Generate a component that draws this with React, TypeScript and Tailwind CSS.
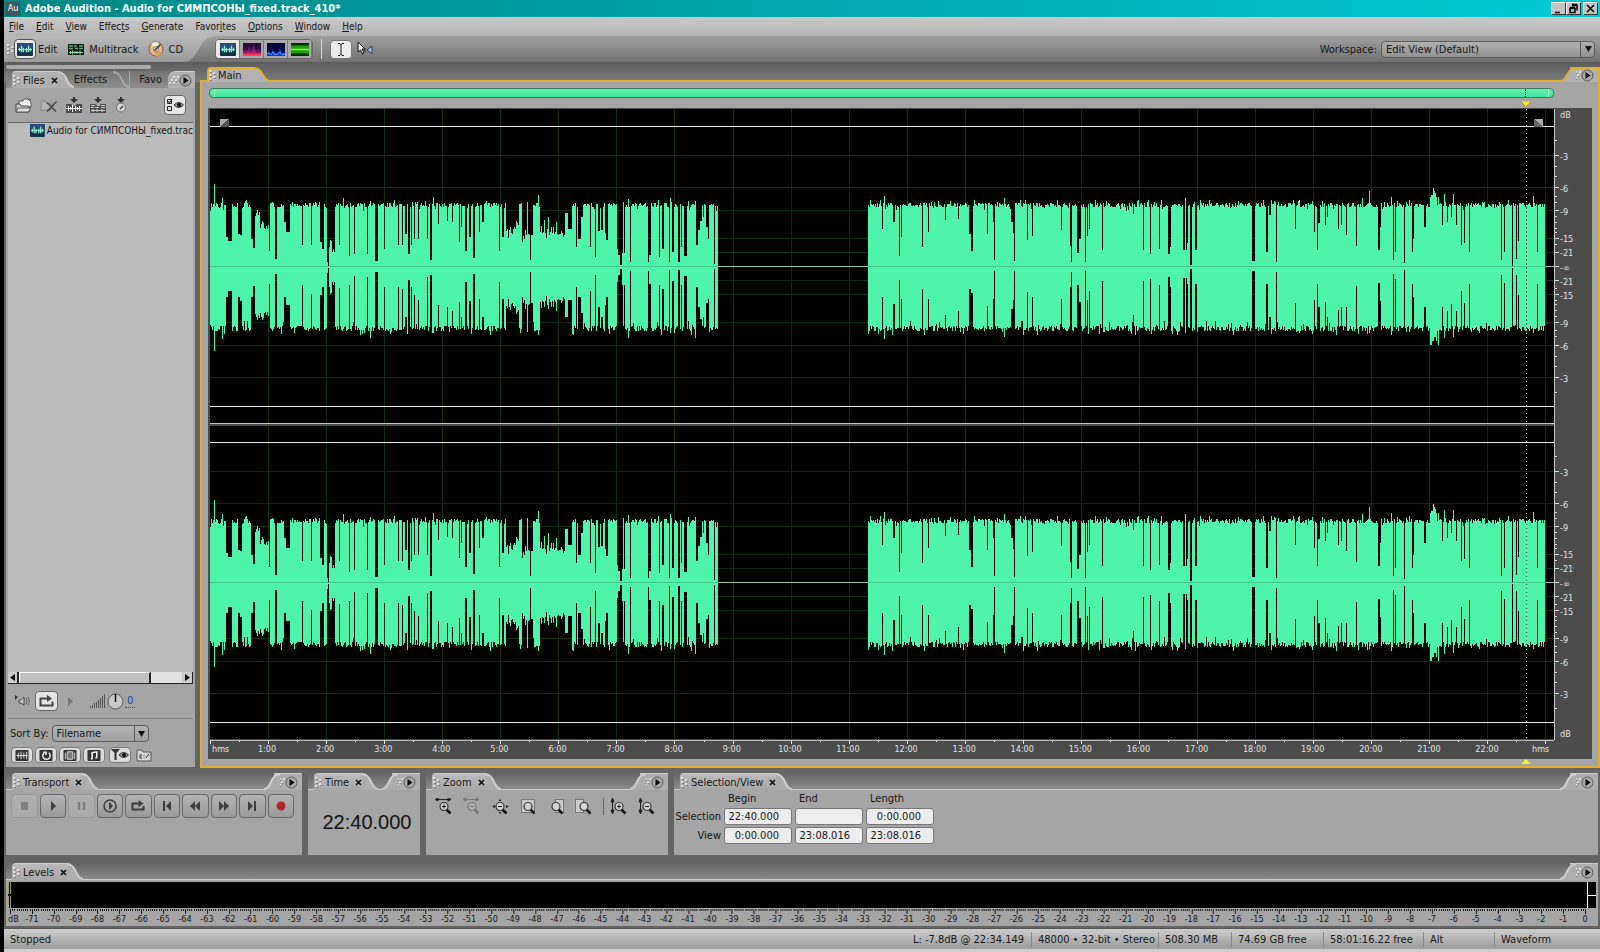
import type { ReactNode } from "react";

const WAVE_WIDTH = 1344;
const CHANNELS = [158, 474];

// x, width, level above the centre line, level below it
const dips: number[][] = [
  [16, 2, 30, 30], [18, 4, 26, 24], [28, 2, 33, 30], [30, 2, 32, 34], [41, 2, 28, 30],
  [43, 2, 19, 19], [45, 5, 56, 52], [50, 9, 41, 48],
  [59, 1, 16, 17], [65, 2, 8, 7], [74, 2, 45, 30], [76, 4, 35, 38], [92, 1, 22, 18], [101, 1, 22, 27],
  [110, 2, 25, 28], [112, 2, 18, 20], [117, 1, 5, 6], [118, 1, 1, 1], [119, 6, 21, 21],
  [129, 1, 22, 21], [133, 1, 4, 4],
  [139, 1, 11, 18], [144, 1, 13, 9], [157, 1, 13, 10], [160, 1, 53, 54], [165, 3, 6, 5],
  [174, 1, 18, 20], [188, 1, 22, 20], [192, 1, 22, 22], [195, 2, 33, 50], [198, 2, 13, 13],
  [201, 1, 22, 20], [204, 1, 28, 28], [208, 1, 28, 33], [217, 1, 28, 10], [220, 2, 7, 8],
  [228, 1, 43, 38], [237, 1, 46, 40], [242, 1, 45, 44], [249, 1, 25, 35], [251, 1, 40, 50],
  [255, 2, 16, 15], [259, 2, 30, 34], [263, 2, 9, 7], [269, 1, 35, 32], [272, 2, 45, 50],
  [289, 1, 16, 15], [292, 2, 30, 32], [296, 7, 35, 38], [303, 6, 43, 44], [312, 8, 31, 36],
  [320, 1, 7, 5], [321, 2, 32, 36],
  [330, 25, 35, 35], [355, 3, 54, 50], [358, 4, 38, 33], [366, 1, 20, 20], [368, 3, 28, 30],
  [371, 2, 50, 46], [380, 1, 20, 24], [385, 1, 10, 8], [388, 2, 36, 40], [391, 2, 37, 50],
  [395, 1, 34, 38], [396, 2, 27, 30], [407, 1, 18, 15], [408, 2, 12, 8], [410, 2, 2, 2],
  [412, 1, 14, 18], [414, 1, 14, 18], [420, 1, 5, 4], [438, 1, 5, 4], [439, 2, 12, 17],
  [449, 1, 10, 18], [452, 2, 18, 22], [459, 1, 5, 3], [462, 2, 15, 14], [468, 2, 5, 3],
  [471, 1, 20, 18], [474, 3, 11, 9], [486, 2, 22, 20], [488, 2, 37, 40], [490, 2, 46, 52],
  [493, 1, 50, 50], [496, 2, 40, 36], [498, 1, 28, 32], [504, 1, 3, 2],
  [672, 1, 38, 30], [683, 2, 45, 37], [689, 1, 11, 13], [691, 1, 30, 32], [712, 1, 20, 22],
  [718, 1, 35, 32], [735, 1, 47, 48], [748, 1, 48, 44], [759, 2, 33, 22], [761, 2, 16, 26],
  [777, 1, 33, 39], [783, 1, 45, 32], [784, 1, 7, 4], [801, 2, 45, 42], [803, 2, 34, 33],
  [804, 1, 6, 4], [817, 1, 27, 25], [822, 1, 31, 30], [851, 1, 37, 32], [860, 1, 21, 20],
  [861, 1, 5, 5], [867, 2, 14, 18], [869, 2, 28, 35], [875, 1, 5, 4], [877, 1, 31, 33],
  [879, 1, 38, 24], [892, 1, 17, 14], [923, 1, 53, 48], [933, 1, 17, 14], [940, 1, 13, 12],
  [949, 1, 18, 18], [958, 2, 13, 10], [960, 1, 20, 20], [973, 4, 17, 11], [977, 1, 24, 17],
  [980, 2, 2, 2], [985, 2, 17, 17], [1042, 3, 6, 4], [1056, 2, 15, 17], [1059, 2, 52, 50],
  [1066, 1, 5, 5], [1085, 1, 38, 36], [1104, 1, 35, 33], [1107, 1, 17, 17], [1108, 2, 44, 40],
  [1115, 1, 42, 35], [1117, 1, 50, 50], [1128, 1, 38, 43], [1131, 1, 42, 40], [1136, 1, 32, 40],
  [1146, 1, 21, 19], [1168, 2, 17, 16], [1170, 1, 40, 34], [1183, 1, 7, 7], [1185, 1, 15, 12],
  [1194, 1, 4, 3], [1202, 1, 15, 17], [1203, 1, 28, 30], [1214, 2, 40, 40], [1232, 1, 42, 40],
  [1237, 1, 45, 44], [1241, 1, 50, 37], [1246, 1, 42, 44], [1251, 1, 22, 24], [1254, 1, 24, 36],
  [1259, 1, 15, 17], [1291, 1, 7, 8], [1294, 1, 15, 16], [1302, 1, 1, 1], [1306, 1, 8, 8],
  [1308, 1, 26, 28], [1327, 1, 15, 17],
];

const peaks: number[][] = [
  [4, 83, 84], [12, 69, 72], [133, 69, 62], [160, 66, 71], [223, 70, 66], [317, 65, 65],
  [328, 72, 68], [334, 47, 40], [338, 50, 42], [346, 45, 44], [418, 68, 71], [460, 69, 66],
  [485, 66, 71], [674, 71, 72], [794, 69, 70], [975, 69, 66], [1152, 69, 64], [1159, 76, 66],
  [1181, 70, 68], [1220, 70, 78], [1221, 72, 78], [1222, 72, 74], [1223, 79, 74], [1224, 76, 70],
  [1225, 74, 70], [1226, 70, 74], [1228, 70, 78], [1234, 73, 71], [1243, 73, 70],
  [1323, 71, 66],
];

function buildLevels() {
  let seed = 41;
  const rand = () => {
    seed = (seed * 16807) % 2147483647;
    return seed / 2147483647;
  };
  const levels: number[][] = [];
  for (let x = 0; x < 1335; x++) {
    const up = 60 + Math.floor(rand() * 5) + (rand() > 0.9 ? 3 : 0) - (rand() > 0.94 ? 4 : 0);
    const down = 59 + Math.floor(rand() * 6) + (rand() > 0.9 ? 4 : 0) - (rand() > 0.94 ? 5 : 0);
    levels.push(x >= 508 && x < 658 ? [0, 0] : [up, down]);
  }
  dips.forEach(([x, w, up, down]) => {
    for (let i = x; i < x + w; i++) {
      const jitter = w > 4 ? Math.round(rand() * 12 - 6) : 0;
      levels[i] = [up + (up > 20 ? jitter : 0), down + (down > 20 ? jitter : 0)];
    }
  });
  peaks.forEach(([x, up, down]) => {
    levels[x] = [up, down];
  });
  return levels;
}

const levels = buildLevels();

const wavePath = (centre: number) =>
  levels
    .map(([up, down], x) => (up ? `M${x + 0.5} ${centre - up}V${centre + down}` : ""))
    .join("");

const gridRows = [-111, -79, -56, -28, -14, 14, 28, 56, 79, 111];
const minutes = Array.from({ length: 22 }, (_, i) => `${i + 1}:00`);

// label and its centre, measured from the top of the chart
const decibels: [string, number][] = [
  ["dB", 6], ["-3", 48], ["-6", 80], ["-9", 103], ["-15", 130], ["-21", 144], ["-∞", 159],
  ["-21", 173], ["-15", 187], ["-9", 215], ["-6", 238], ["-3", 270], ["-3", 364], ["-6", 396],
  ["-9", 419], ["-15", 446], ["-21", 460], ["-∞", 475], ["-21", 489], ["-15", 503], ["-9", 531],
  ["-6", 554], ["-3", 586], ["dB", 625],
];

const menus = [
  ["", "F", "ile"],
  ["", "E", "dit"],
  ["", "V", "iew"],
  ["Effec", "t", "s"],
  ["", "G", "enerate"],
  ["Favor", "i", "tes"],
  ["", "O", "ptions"],
  ["", "W", "indow"],
  ["", "H", "elp"],
];

function Grip() {
  return (
    <svg className="h-[11px] w-[7px] shrink-0" viewBox="0 0 7 11">
      <path d="M0 1h2M0 5h2M0 9h2M4 3h2M4 7h2" stroke="#e2e2e2" strokeWidth="2" />
      <path d="M1 2.500h2M1 6.500h2M1 10.500h2M5 4.500h2M5 8.500h2" stroke="#808080" />
    </svg>
  );
}

function PanelMenu() {
  return (
    <button className="flex shrink-0 items-center" aria-label="Panel menu">
      <svg className="h-[9px] w-[11px]" viewBox="0 0 11 9">
        <path d="M5 1h2M9 1h2M3 4h2M7 4h2M1 7h2M5 7h2" stroke="#dedede" strokeWidth="2" />
        <path d="M6 2.500h1M4 5.500h1M8 5.500h1M2 8.500h1M6 8.500h1" stroke="#777" />
      </svg>
      <svg className="size-[13px]" viewBox="0 0 13 13">
        <circle cx="6.500" cy="6.500" r="5.500" fill="#aaa" stroke="#555" />
        <path d="M4.500 3v7l5-3.500z" fill="#000" />
      </svg>
    </button>
  );
}

function Slope({ flip, color, fill }: { flip?: boolean; color: string; fill: string }) {
  return (
    <svg
      className={flip ? "h-full w-4 shrink-0 -scale-x-100" : "h-full w-4 shrink-0"}
      viewBox="0 0 16 16"
      preserveAspectRatio="none"
    >
      <path d="M0 1C5 1 7 4 9 8.500S13 15 16 15V16H0z" fill={fill} />
      <path d="M0 1C5 1 7 4 9 8.500S13 15 16 15" fill="none" stroke={color} strokeWidth="2" />
    </svg>
  );
}

function Header({ title }: { title: string }) {
  return (
    <div className="flex h-[17px] bg-gradient-to-b from-[#646464] to-[#8e8e8e]">
      <span className="w-[6px] border-b border-[#cfcfcf]" />
      <div className="flex items-center gap-[3px] rounded-tl border-t border-[#cfcfcf] bg-gradient-to-b from-[#bbb] to-[#a8a8a8] pl-px">
        <Grip />
        <h2>{title}</h2>
        <CloseTab />
      </div>
      <Slope color="#cfcfcf" fill="#aeaeae" />
      <span className="flex-1 border-b border-[#cfcfcf]" />
      <Slope flip color="#cfcfcf" fill="#aeaeae" />
      <div className="-ml-[6px] flex items-center border-t border-[#cfcfcf] bg-[#aeaeae] pr-1">
        <PanelMenu />
      </div>
    </div>
  );
}

function CloseTab() {
  return (
    <button className="ml-[3px]" aria-label="Close tab">
      <svg className="size-[7px]" viewBox="0 0 7 7">
        <path d="M1 1l5 5M6 1L1 6" stroke="#111" strokeWidth="1.700" />
      </svg>
    </button>
  );
}

function TitleBar() {
  return (
    <header className="flex h-[17px] items-center gap-[5px] bg-gradient-to-r from-[#008788] to-[#00c9d4] px-[2px]">
      <span className="flex h-[14px] w-[14px] items-center justify-center bg-[#3d5860] text-[9px] text-white">Au</span>
      <h1 className="flex-1 text-[11px] font-bold text-white">
        Adobe Audition - Audio for СИМПСОНЫ_fixed.track_410*
      </h1>
      <div className="flex">
        {["M2 9.500h5", "M4 2.500h5v5M4 1.500h5M2 5.500h5v4h-5zM2 4.500h5", "M2 2l7 7M9 2l-7 7"].map((d, i) => (
          <button
            key={i}
            aria-label={["Minimize", "Restore", "Close"][i]}
            className="flex h-[13px] w-[15px] items-center justify-center border border-t-white border-l-white border-r-[#333] border-b-[#333] bg-[#c4c4c4] last:ml-[2px]"
          >
            <svg className="size-[11px]" viewBox="0 0 11 11">
              <path d={d} fill="none" stroke="#000" strokeWidth="1.500" />
            </svg>
          </button>
        ))}
      </div>
    </header>
  );
}

function WaveIcon() {
  return (
    <svg className="h-[13px] w-[16px]" viewBox="0 0 16 14" preserveAspectRatio="none">
      <rect width="16" height="14" rx="1" fill="#14304c" />
      <rect width="16" height="5" fill="#2a4a7c" />
      <path
        d="M2.500 5v4M4.500 3v7M6.500 5v5M9.500 5v5M11.500 3v7M13.500 5v4"
        stroke="#8ff0d0"
        strokeWidth="1.400"
      />
      <path d="M1 7h14" stroke="#8ff0d0" />
    </svg>
  );
}

function SessionIcon({ mono }: { mono?: boolean }) {
  return (
    <svg className="h-[11px] w-[16px]" viewBox="0 0 16 11">
      <rect width="16" height="11" fill={mono ? "#3c3c3c" : "#0e1c16"} />
      <path d="M1 2h4M6 2h3M11 2h4M1 4.500h4M7 4.500h3M11 4.500h4" stroke={mono ? "#bbb" : "#5aa877"} strokeWidth="1.400" />
      <path
        d="M1 8.500h14M2.500 7v3M4.500 6.500v4M7 7v3M9 7v3M12 6.500v4"
        stroke={mono ? "#ddd" : "#9adcb6"}
      />
    </svg>
  );
}

function DiscIcon() {
  return (
    <svg className="size-[16px]" viewBox="0 0 16 16">
      <circle cx="8" cy="8" r="7" fill="#eebc74" stroke="#5d5470" />
      <path d="M8 8L3 3a7 7 0 0 1 8-1z" fill="#fff3d5" />
      <path d="M8 8l6 4a7 7 0 0 1-7 3z" fill="#e0a05a" />
      <circle cx="8" cy="8" r="2.500" fill="#eee" stroke="#777" />
      <path d="M6.500 9.500l6-6" stroke="#333" strokeWidth="1.500" />
    </svg>
  );
}

function Spectrum({ kind }: { kind: number }) {
  const tone = ["#2b0a3c", "#04063c", "#052c05"][kind];
  return (
    <svg className="h-[13px] w-[18px]" viewBox="0 0 18 13">
      <rect width="18" height="13" fill={tone} />
      {kind === 0 && (
        <>
          <path d="M0 13V8l2-3 2 3 2-5 2 4 3-5 2 6 2-3 3 4v4z" fill="#6a1a72" />
          <path d="M0 12V9l3 1 2-2 3 2 3-3 3 3 4-1v3z" fill="#c2246c" />
          <path d="M0 12h18" stroke="#ff3b5c" strokeWidth="2" />
        </>
      )}
      {kind === 1 && (
        <>
          <path d="M0 13v-3l2-2 2 2 2-4 2 4 3-1 2-4 2 5 3-1v4z" fill="#1238c8" />
          <path d="M0 11l2-1 2 2 2-3 2 3 3-1 2-2 2 3 3-1" fill="none" stroke="#4a9aff" />
        </>
      )}
      {kind === 2 && (
        <>
          <path d="M0 4h18M0 9h18" stroke="#1f9e12" strokeWidth="3" />
          <path d="M0 6.500h18" stroke="#67ff37" strokeWidth="2" />
        </>
      )}
    </svg>
  );
}

function Toolbar() {
  const viewButton = "flex h-[18px] w-6 items-center justify-center border-r border-[#777]";
  return (
    <div className="flex h-[26px] items-center bg-gradient-to-b from-[#a2a2a2] to-[#717171]">
      <div className="flex h-full items-center bg-gradient-to-b from-[#b9b9b9] to-[#9b9b9b] pl-[3px]">
        <Grip />
        <button className="flex items-center gap-[2px]">
          <span className="flex h-[20px] w-[22px] items-center justify-center rounded-sm border border-[#555] bg-[#e6e6e6]">
            <WaveIcon />
          </span>
          Edit
        </button>
        <button className="ml-[11px] flex items-center gap-[5px]">
          <SessionIcon />
          Multitrack
        </button>
        <button className="ml-[9px] flex items-center gap-[5px]">
          <DiscIcon />
          CD
        </button>
      </div>
      <svg className="h-full w-[32px] shrink-0" viewBox="0 0 34 26" preserveAspectRatio="none">
        <defs>
          <linearGradient id="lobe" x1="0" y1="0" x2="0" y2="1">
            <stop offset="0" stopColor="#b9b9b9" />
            <stop offset="1" stopColor="#9b9b9b" />
          </linearGradient>
        </defs>
        <path d="M0 0h34C22 1 20 9 15 16S6 26 0 26z" fill="url(#lobe)" />
      </svg>
      <div className="flex overflow-hidden rounded-sm border border-[#666]">
        <button className={`${viewButton} bg-[#e9e9e9]`} aria-label="Waveform display">
          <WaveIcon />
        </button>
        {["Spectral frequency", "Spectral pan", "Spectral phase"].map((name, i) => (
          <button key={name} className={`${viewButton} bg-[#aaa]`} aria-label={name}>
            <Spectrum kind={i} />
          </button>
        ))}
      </div>
      <span className="ml-2 h-5 w-px bg-[#d8d8d8]" />
      <button
        className="ml-2 flex h-[19px] w-[22px] items-center justify-center rounded-sm border border-[#777] bg-[#ececec]"
        aria-label="Time selection tool"
      >
        <svg className="h-[13px] w-[8px]" viewBox="0 0 8 13">
          <path d="M1 .5h2l1 1 1-1h2M4 1v11M1 12.500h2l1-1 1 1h2" fill="none" stroke="#111" />
        </svg>
      </button>
      <button className="ml-[5px]" aria-label="Scrub tool">
        <svg className="h-[16px] w-[17px]" viewBox="0 0 17 16">
          <path d="M1 1v10l2.500-2 2 4 1.500-1-2-4h3z" fill="#eee" stroke="#111" />
          <path d="M15 5v8l-5-4z" fill="#8fc0e6" stroke="#24425c" />
          <path d="M8 7v4" stroke="#222" />
        </svg>
      </button>
      <label className="ml-auto mr-1" htmlFor="workspace">Workspace:</label>
      <div className="relative mr-[5px] w-[214px]">
        <select
          id="workspace"
          className="block h-[17px] w-full appearance-none rounded-sm border border-[#5a5a5a] bg-gradient-to-b from-[#b0b0b0] to-[#929292] pl-1 leading-[15px]"
        >
          <option>Edit View (Default)</option>
        </select>
        <DropArrow />
      </div>
    </div>
  );
}

function DropArrow() {
  return (
    <span className="pointer-events-none absolute top-0 right-0 flex h-full w-[15px] items-center justify-center border-l border-[#5a5a5a]">
      <svg className="h-[6px] w-[7px]" viewBox="0 0 7 6">
        <path d="M0 0h7L3.500 6z" fill="#111" />
      </svg>
    </span>
  );
}

const importShapes = [
  <path key="wave" d="M0 11.500h16M2.500 9v5M4.500 10v3M6.500 8v7M9.500 9v5M11.500 10v3M13.500 9v5" stroke="#ececec" />,
  <path key="session" d="M1 8.500h4M7 8.500h3M11 8.500h4M1 10.500h3M5 10.500h4M11 10.500h4M1 13.500h14M3 12v3M7 12v3M12 12v3" stroke="#ccc" />,
];

function FileToolbar() {
  return (
    <div className="flex h-[34px] items-center gap-2 px-[9px]">
      <button aria-label="Import file">
        <svg className="h-[15px] w-[18px]" viewBox="0 0 18 15">
          <path d="M4 9V3h4l1-2h6v7" fill="#eee" stroke="#555" />
          <path d="M13 1l3 3v5h-3" fill="#fff" stroke="#555" />
          <path d="M1 14V6h4l1 2h8v6z" fill="#d0d0d0" stroke="#444" />
          <path d="M1 14l2-4h13l-3 4z" fill="#e4e4e4" stroke="#555" />
        </svg>
      </button>
      <button className="-ml-px" aria-label="Close file">
        <svg className="h-[15px] w-[18px]" viewBox="0 0 18 15">
          <path d="M1 12V3h4l1 2h5v7z" fill="#b4b4b4" stroke="#888" />
          <path d="M7 4.500l9 9M16.500 3.500l-9.500 10" stroke="#444" strokeWidth="1.500" />
        </svg>
      </button>
      {importShapes.map((shape, i) => (
        <button key={i} aria-label={["Insert into edit view", "Insert into multitrack"][i]}>
          <svg className="h-[16px] w-[16px]" viewBox="0 0 16 16">
            <path d="M7 0h2v2h3L8 6 4 2h3z" fill="#333" />
            <path d="M0 7h5l3 2 3-2h5v9H0z" fill="#4c4c4c" />
            {shape}
          </svg>
        </button>
      ))}
      <button aria-label="Insert into CD">
        <svg className="h-[16px] w-[14px]" viewBox="0 0 14 16">
          <path d="M6 0h2v2h3L7 6 3 2h3z" fill="#333" />
          <circle cx="7" cy="10.500" r="4.500" fill="#d8d8d8" stroke="#666" />
          <path d="M6 12l3-3" stroke="#333" strokeWidth="1.500" />
        </svg>
      </button>
      <button
        className="ml-auto flex h-[20px] w-[22px] items-center justify-center rounded-sm border border-[#666] bg-[#e6e6e6]"
        aria-label="Show options"
      >
        <svg className="h-[14px] w-[18px]" viewBox="0 0 18 14">
          <path d="M1.500 1.500h4v4h-4zM1.500 8.500h4v4h-4zM2 3l1.500 2L6 1" fill="none" stroke="#222" />
          <EyeShape />
        </svg>
      </button>
    </div>
  );
}

function EyeShape() {
  return (
    <>
      <path d="M8 7q4.500-5 9.500 0-5 5-9.500 0z" fill="#999" stroke="#333" />
      <circle cx="13" cy="7" r="2" fill="#111" />
    </>
  );
}

const filterShapes = [
  <path key="a" d="M2 7h12M4 4v6M7 3v8M10 4v6M13 3v8" stroke="#eee" />,
  <path key="b" d="M6 4a4 4 0 1 0 5 0M5 3.500h3v3" fill="none" stroke="#eee" strokeWidth="1.600" />,
  <path key="c" d="M5 3v8h6V3zM3 4v7M13 4v7" fill="#777" stroke="#ddd" />,
  <path key="d" d="M6 10V4l5-1v6M4.500 10.500h2M9.500 9.500h2" fill="none" stroke="#fff" strokeWidth="1.600" />,
];

function FilesPanel() {
  return (
    <aside className="flex w-[189px] shrink-0 flex-col pt-[3px] pb-px">
      <div className="mb-[2px] h-1 w-[145px] rounded-full bg-[#a9a9a9]" />
      <section className="flex flex-1 flex-col bg-[#a5a5a5]">
        <div className="flex h-[17px] bg-gradient-to-b from-[#747474] to-[#8e8e8e]">
          <div className="ml-[6px] flex items-center gap-[3px] rounded-tl border-t border-[#cfcfcf] bg-[#b0b0b0] pl-px">
            <Grip />
            <h2>Files</h2>
            <CloseTab />
          </div>
          <Slope color="#cfcfcf" fill="#b0b0b0" />
          <button className="leading-4">Effects</button>
          <span className="ml-[6px]">
            <Slope color="#a8a8a8" fill="transparent" />
          </span>
          <button className="border-l border-[#a8a8a8] pl-[9px] leading-4">Favo</button>
          <div className="ml-auto flex items-center rounded-tl-lg border-t border-[#cfcfcf] bg-[#b0b0b0] pr-[3px]">
            <PanelMenu />
          </div>
        </div>
        <FileToolbar />
        <div className="mx-[2px] flex flex-1 flex-col border-t border-[#666] bg-[#bcbcbc]">
          <ul className="flex-1">
            <li className="flex items-center gap-[2px] pl-[22px] text-[10px] whitespace-nowrap">
              <WaveIcon />
              Audio for СИМПСОНЫ_fixed.trac
            </li>
          </ul>
          <div className="flex h-3 border-b border-[#222] bg-[#e2e2e2]">
            <button className="w-[11px] border-r-2 border-[#222] bg-[#ccc]" aria-label="Scroll left">
              <svg className="mx-auto h-[7px] w-[5px]" viewBox="0 0 5 7"><path d="M5 0v7L0 3.500z" /></svg>
            </button>
            <span className="w-[132px] border-t border-r-2 border-l border-t-white border-r-[#222] border-l-white bg-[#c0c0c0]" />
            <button className="ml-auto w-[11px] border-r border-[#222] bg-[#ccc]" aria-label="Scroll right">
              <svg className="mx-auto h-[7px] w-[5px]" viewBox="0 0 5 7"><path d="M0 0v7l5-3.500z" /></svg>
            </button>
          </div>
        </div>
        <div className="mx-[2px] flex h-[35px] items-center border-b border-[#808080] pl-[7px]">
          <button aria-label="Auto-play">
            <svg className="h-[14px] w-[16px]" viewBox="0 0 16 14">
              <path d="M0 1v5l3-3z" fill="#333" />
              <path d="M4 6h2l3-3v8L6 9H4z" fill="#ccc" stroke="#444" />
              <path d="M11 4q2 3 0 6M13 3q3 4 0 8" fill="none" stroke="#666" />
            </svg>
          </button>
          <button
            className="ml-1 flex h-[20px] w-[23px] items-center justify-center rounded-sm border border-[#666] bg-[#e4e4e4]"
            aria-label="Loop"
          >
            <LoopIcon />
          </button>
          <button className="ml-[10px]" aria-label="Play file">
            <svg className="h-[9px] w-[5px]" viewBox="0 0 5 9"><path d="M0 0v9l5-4.500z" fill="#777" /></svg>
          </button>
          <svg className="ml-4 h-[14px] w-[16px]" viewBox="0 0 16 14">
            <path d="M1.500 12v2M3.500 11v3M5.500 9v5M7.500 8v6M9.500 6v8M11.500 4v10M13.500 2v12M15.500 0v14" stroke="#555" />
          </svg>
          <svg className="ml-[2px] size-[17px]" viewBox="0 0 17 17">
            <circle cx="8.500" cy="8.500" r="7.500" fill="#c9c9c9" stroke="#555" />
            <path d="M8.500 1v8" stroke="#111" strokeWidth="1.500" />
          </svg>
          <a href="#volume" className="ml-px border-b border-dotted border-[#2447c0] px-[2px] leading-[13px] text-[#2447c0]">0</a>
        </div>
        <div className="flex items-center gap-[3px] pt-[6px] pl-1">
          <label htmlFor="sort">Sort By:</label>
          <div className="relative w-[97px]">
            <select
              id="sort"
              className="block h-[17px] w-full appearance-none rounded-sm border border-[#5a5a5a] bg-gradient-to-b from-[#b4b4b4] to-[#a0a0a0] pl-1 leading-[15px]"
            >
              <option>Filename</option>
            </select>
            <DropArrow />
          </div>
        </div>
        <div className="flex items-center gap-[2px] pt-[5px] pb-[4px] pl-[5px]">
          {filterShapes.map((shape, i) => (
            <button
              key={i}
              aria-label={["Show audio", "Show loops", "Show video", "Show MIDI"][i]}
              className="flex h-[16px] w-[22px] items-center justify-center rounded-sm border border-[#777] bg-[#dcdcdc]"
            >
              <svg className="h-[13px] w-[16px]" viewBox="0 0 16 14">
                <rect x="1" y="1" width="14" height="12" rx="1" fill="#333" />
                {shape}
              </svg>
            </button>
          ))}
          <button
            className="ml-[2px] flex h-[16px] w-[22px] items-center justify-center rounded-sm border border-[#777] bg-[#dcdcdc]"
            aria-label="Show markers"
          >
            <svg className="h-[14px] w-[18px]" viewBox="0 0 18 14">
              <path d="M0 1h9L5.500 5v7h-2V5z" fill="#333" />
              <EyeShape />
            </svg>
          </button>
          <button className="ml-[3px]" aria-label="Show full paths">
            <svg className="h-[13px] w-[16px]" viewBox="0 0 16 13">
              <path d="M1 12V1h5l1 2h8v9z" fill="#d5d5d5" stroke="#555" />
              <path d="M6 6H4v3h2M8 6v.8M8 8.500v.8M10 9l3-4" fill="none" stroke="#333" />
            </svg>
          </button>
        </div>
      </section>
    </aside>
  );
}

function Waveform() {
  return (
    <svg className="block h-[630px] w-full" viewBox="0 0 1344 630" preserveAspectRatio="none">
      <rect width={WAVE_WIDTH} height="630" fill="#000" />
      <g stroke="#0d2c10" strokeWidth="1">
        {Array.from({ length: 23 }, (_, i) => (
          <path key={i} d={`M${Math.round((i + 1) * 58.06) + 0.5} 0V630`} />
        ))}
        {CHANNELS.map((centre) =>
          gridRows.map((row) => <path key={centre + row} d={`M0 ${centre + row - 0.5}H1344`} />),
        )}
      </g>
      {CHANNELS.map((centre) => (
        <g key={centre}>
          <path d={wavePath(centre)} stroke="#4ef4aa" strokeWidth="1" />
          <path d={`M0 ${centre - 0.5}H1344`} stroke="#3fc78a" />
          <path d={`M508 ${centre - 0.5}H658M1336 ${centre - 0.5}H1344`} stroke="#9fc4ae" />
          <path d={`M0 ${centre - 140.5}H1344M0 ${centre + 139.5}H1344`} stroke="#e8e8e8" />
        </g>
      ))}
      <rect y="314" width={WAVE_WIDTH} height="3" fill="#4b4b4b" />
      <path d="M0 314.500H1344" stroke="#c4c4c4" />
      <path d="M10 10h9l-9 8z" fill="#aaa" />
      <path d="M19 10v8h-9z" fill="#555" />
      <path d="M1324 10h9v8z" fill="#aaa" />
      <path d="M1324 10v8h9z" fill="#666" />
      <path d="M1316.500 94V224M1316.500 411V540" stroke="#17603e" strokeDasharray="2 2" />
      <path d="M1316.500 0V630" stroke="#f0e98a" strokeDasharray="1 3" />
    </svg>
  );
}

function DecibelRuler() {
  return (
    <div className="flex border-l border-[#c8c8c8] text-[9px] leading-3 text-[#e4e4e4]">
      <svg className="h-[630px] w-[4px] shrink-0" viewBox="0 0 4 630">
        {CHANNELS.map((centre) => (
          <g key={centre} stroke="#ddd">
            <path d={`M0 ${centre - 0.5}h4`} />
            {gridRows.map((row) => (
              <path key={row} d={`M0 ${centre + row - 0.5}h4`} />
            ))}
            {[-126, -100, -90, -70, -64, -50, -44, -38, -34, -22, 22, 34, 38, 44, 50, 64, 70, 90, 100, 126].map((row) => (
              <path key={row} d={`M0 ${centre + row - 0.5}h2`} />
            ))}
          </g>
        ))}
      </svg>
      <div className="pl-px">
        {decibels.map(([label, y], i) => (
          <div key={i} style={{ marginTop: i ? y - decibels[i - 1][1] - 12 : y - 6 }}>
            {label}
          </div>
        ))}
      </div>
    </div>
  );
}

function MainPanel() {
  return (
    <main className="ml-[5px] flex min-w-0 flex-1 flex-col pt-[5px]">
      <div className="flex h-[15px]">
        <span className="w-[7px] border-b-2 border-[#e6ad2b]" />
        <div className="flex items-center gap-[2px] rounded-tl border-t-2 border-l-2 border-[#e6ad2b] bg-[#b2b2b2]">
          <Grip />
          <h2>Main</h2>
        </div>
        <span className="w-3 border-t-2 border-[#e6ad2b] bg-[#b2b2b2]" />
        <Slope color="#e6ad2b" fill="#b2b2b2" />
        <span className="flex-1 border-b-2 border-[#e6ad2b]" />
        <Slope flip color="#e6ad2b" fill="#b2b2b2" />
        <div className="-ml-[6px] flex items-center border-t-2 border-r-2 border-[#e6ad2b] bg-[#b2b2b2] pr-1">
          <PanelMenu />
        </div>
      </div>
      <div className="border-x-2 border-b-2 border-[#e6ad2b] bg-[#a5a5a5] px-[6px] pt-[6px] pb-[7px]">
        <div className="relative mr-[38px] mb-[10px] ml-px h-[10px] rounded-sm border border-[#3c7a5c] bg-gradient-to-b from-[#5ff5b3] to-[#3fe39a]">
          <span className="absolute top-0 left-1 h-2 w-px bg-[#9ff8d0]" />
          <span className="absolute top-0 right-1 h-2 w-px bg-[#9ff8d0]" />
          <span className="absolute top-0 left-[97.9%] h-2 border-l border-dotted border-[#123]" />
          <svg className="absolute top-[12px] left-[97.6%] h-[6px] w-[10px]" viewBox="0 0 10 6">
            <path d="M0 0h10L5 6z" fill="#f4ee2c" stroke="#8a8418" strokeWidth=".6" />
          </svg>
        </div>
        <div className="relative bg-[#4b4b4b] pt-px pl-[2px]">
          <div className="grid grid-cols-[1fr_38px]">
            <Waveform />
            <DecibelRuler />
          </div>
          <div className="mr-[38px] h-[19px]">
            <svg className="block h-[4px] w-full" viewBox="0 0 1344 4" preserveAspectRatio="none">
              <path d="M0 .5H1344" stroke="#bbb" />
              {Array.from({ length: 47 }, (_, i) => (
                <path key={i} d={`M${Math.round(i * 29.03) + 0.5} 0v${i % 2 ? 2 : 4}`} stroke="#ddd" />
              ))}
            </svg>
            <div className="flex text-[9px] leading-[11px] text-[#e4e4e4]">
              <span className="w-7 pl-[2px]">hms</span>
              {minutes.map((m) => (
                <span key={m} className="flex-[1_1_0px] text-center">{m}</span>
              ))}
              <span className="w-[38px] pl-4">hms</span>
            </div>
          </div>
          <svg className="absolute top-full left-[94.9%] h-[5px] w-[10px]" viewBox="0 0 10 5">
            <path d="M0 5h10L5 0z" fill="#f4ee2c" />
          </svg>
        </div>
      </div>
    </main>
  );
}

function LoopIcon() {
  return (
    <svg className="h-[12px] w-[15px]" viewBox="0 0 15 12">
      <path d="M4 3.500H1.500V10.500H13.500V6.500" fill="none" stroke="#444" strokeWidth="2" />
      <path d="M4 3.500H9" stroke="#444" strokeWidth="2" />
      <path d="M8 0v7l5-3.500z" fill="#444" />
    </svg>
  );
}

const transport: [string, ReactNode][] = [
  ["Stop", <rect x="5" y="4" width="7" height="8" fill="#7e7e7e" />],
  ["Play", <path d="M6 3v10l5-5z" fill="#3d3d3d" />],
  ["Pause", <path d="M6 4v8M11 4v8" stroke="#808080" strokeWidth="2.500" />],
  [
    "Play to end",
    <>
      <circle cx="8" cy="8" r="6" fill="none" stroke="#3d3d3d" strokeWidth="1.500" />
      <path d="M7 4v8l4-4z" fill="#3d3d3d" />
    </>,
  ],
  [
    "Play looped",
    <>
      <path d="M4 5.500H2.500v6h11V8M4 5.500h6" fill="none" stroke="#3d3d3d" strokeWidth="2" />
      <path d="M8.500 2v7l5-3.500z" fill="#3d3d3d" />
    </>,
  ],
  ["Go to beginning", <path d="M4 3h2v10H4zM12 3v10L7 8z" fill="#3d3d3d" />],
  ["Rewind", <path d="M8 3v10L3 8zM13 3v10L8 8z" fill="#3d3d3d" />],
  ["Fast forward", <path d="M3 3v10l5-5zM8 3v10l5-5z" fill="#3d3d3d" />],
  ["Go to end", <path d="M4 3v10l5-5zM10 3h2v10h-2z" fill="#3d3d3d" />],
  ["Record", <circle cx="8" cy="8" r="4.500" fill="#b32626" />],
];

function Lens({ sign, dim }: { sign?: string; dim?: boolean }) {
  const ink = dim ? "#777" : "#333";
  return (
    <>
      <path d="M11.500 11.500l4 4" stroke={dim ? ink : "#111"} strokeWidth="2.500" />
      <circle cx="9" cy="8.500" r="4" fill={dim ? "#b0b0b0" : "#d4d4d4"} stroke={ink} strokeWidth="1.200" />
      {sign && <path d={sign === "+" ? "M7 8.500h4M9 6.500v4" : "M7 8.500h4"} stroke={dim ? ink : "#111"} />}
    </>
  );
}

const across = "M1 1.500h14M3 0v3L0 1.500zM13 0v3l3-1.500z";
const upDown = "M2.500 2v11M1 4h3L2.500 0zM1 12h3l-1.500 4z";

const zooms: [string, ReactNode][] = [
  ["Zoom in horizontally", <><path d={across} fill="#222" stroke="#222" /><Lens sign="+" /></>],
  ["Zoom out horizontally", <><path d={across} fill="#777" stroke="#777" /><Lens sign="-" dim /></>],
  ["Zoom out full", <><path d="M1 8.500l3-1.500v3zM15 7l3 1.500-3 1.500zM7.500 3L9 1l1.500 2zM7.500 14L9 16l1.500-2z" fill="#222" /><Lens sign="-" /></>],
  ["Zoom to selection", <><path d="M2.500 1.500h13v13h-13z" fill="#ccc" stroke="#333" strokeDasharray="1 1" /><Lens /></>],
  ["Zoom to left edge", <><path d="M8.500 1.500h8v13h-8z" fill="#ccc" stroke="#333" strokeDasharray="1 1" /><Lens /></>],
  ["Zoom to right edge", <><path d="M.5 1.500h8v13h-8z" fill="#ccc" stroke="#333" strokeDasharray="1 1" /><Lens /></>],
  ["Zoom in vertically", <><path d={upDown} fill="#222" stroke="#222" /><Lens sign="+" /></>],
  ["Zoom out vertically", <><path d={upDown} fill="#222" stroke="#222" /><Lens sign="-" /></>],
];

const fields = [
  { name: "Selection", values: ["22:40.000", "", "0:00.000"] },
  { name: "View", values: ["0:00.000", "23:08.016", "23:08.016"] },
];

function BottomPanels() {
  const panel = "flex h-[82px] flex-col bg-[#a5a5a5]";
  return (
    <div className="flex gap-[6px] px-[2px] pt-[5px]">
      <section className={`${panel} w-[296px]`}>
        <Header title="Transport" />
        <div className="mt-1 ml-[5px] grid w-[283px] grid-cols-10 gap-[2px]">
          {transport.map(([name, shape]) => (
            <button
              key={name}
              aria-label={name}
              disabled={name === "Stop" || name === "Pause"}
              className="flex h-6 items-center justify-center rounded-sm border border-[#666] bg-gradient-to-b from-[#b4b4b4] to-[#9a9a9a] disabled:border-[#999] disabled:from-[#b0b0b0] disabled:to-[#aaa]"
            >
              <svg className="size-4" viewBox="0 0 16 16">{shape}</svg>
            </button>
          ))}
        </div>
      </section>
      <section className={`${panel} w-[112px]`}>
        <Header title="Time" />
        <p className="flex flex-1 items-center justify-center pl-[6px] font-['Liberation_Sans',sans-serif] text-[20px] text-[#111]">
          22:40.000
        </p>
      </section>
      <section className={`${panel} w-[242px]`}>
        <Header title="Zoom" />
        <div className="mt-2 ml-[9px] flex gap-[10px]">
          {zooms.map(([name, shape], i) => (
            <button key={name} aria-label={name} className={i === 6 ? "border-l border-[#666] pl-[6px]" : ""}>
              <svg className="h-[17px] w-[18px]" viewBox="0 0 18 17">{shape}</svg>
            </button>
          ))}
        </div>
      </section>
      <section className={`${panel} min-w-0 flex-1`}>
        <Header title="Selection/View" />
        <div className="grid grid-cols-[47px_68px_68px_68px] items-center gap-x-[3px] gap-y-[2px] pt-px">
          <span />
          <span className="pl-1">Begin</span>
          <span className="pl-1">End</span>
          <span className="pl-1">Length</span>
          {fields.map(({ name, values }) => [
            <span key={name} className="flex justify-end whitespace-nowrap">{name}</span>,
            ...values.map((value, i) => (
              <input
                key={name + i}
                aria-label={`${name} ${["begin", "end", "length"][i]}`}
                defaultValue={value}
                className="h-[17px] w-full rounded-[3px] border border-[#777] bg-[#ededed] pr-3 text-right"
              />
            )),
          ])}
        </div>
      </section>
    </div>
  );
}

function LevelsPanel() {
  const step = 1574 / 72;
  const ticks = Array.from({ length: 721 }, (_, i) => {
    const x = Math.round(2 + (i * step) / 10) + 0.5;
    return `M${x} 1v${i % 10 ? 2 : 5}`;
  }).join("");
  return (
    <section className="mx-[2px] mt-2 mb-[2px] bg-[#a5a5a5]">
      <Header title="Levels" />
      <div className="px-[2px] pt-[2px] pb-px">
        <div className="flex h-[26px] justify-between bg-black">
          <div className="flex w-[3px] flex-col gap-[2px]">
            <span className="flex-1 border-x border-[#9b9a68]" />
            <span className="flex-1 border-x border-[#9b9a68]" />
          </div>
          <div className="flex w-[9px] flex-col border-l border-white">
            <span className="flex-1 border-b border-white" />
            <span className="flex-1" />
          </div>
        </div>
        <svg className="block h-[6px] w-full" viewBox="0 0 1587 6" preserveAspectRatio="none">
          <path d={ticks} stroke="#1a1a1a" />
        </svg>
        <div className="flex text-[9px] leading-[11px]">
          <span className="w-[13px]">dB</span>
          {Array.from({ length: 72 }, (_, i) => (
            <span key={i} className="flex-[1_1_0px] text-center">{i - 71}</span>
          ))}
        </div>
      </div>
    </section>
  );
}

function StatusBar() {
  const cell = "shrink-0 border-l border-[#888] pl-[6px] whitespace-nowrap";
  return (
    <footer className="flex-1 bg-[#d0d0d0]">
      <div className="flex h-[21px] items-center border-t border-[#555] bg-gradient-to-b from-[#cdcdcd] to-[#9c9c9c]">
        <span className="flex-1 pl-[6px]">Stopped</span>
        <span className="w-[118px] shrink-0 whitespace-nowrap">L: -7.8dB @ 22:34.149</span>
        <span className={`${cell} w-[127px]`}>48000 • 32-bit • Stereo</span>
        <span className={`${cell} w-[73px]`}>508.30 MB</span>
        <span className={`${cell} w-[92px]`}>74.69 GB free</span>
        <span className={`${cell} w-[100px]`}>58:01:16.22 free</span>
        <span className={`${cell} w-[71px]`}>Alt</span>
        <span className={`${cell} w-[106px]`}>Waveform</span>
      </div>
    </footer>
  );
}

export default function App() {
  return (
    <div className="min-h-screen bg-black pl-1 font-['DejaVu_Sans_Condensed','Noto_Sans',sans-serif] text-[11px] leading-[15px] text-[#161616]">
      <div className="flex min-h-screen flex-col bg-[#646464]">
        <TitleBar />
        <nav className="flex h-[19px] items-center gap-3 bg-gradient-to-b from-[#c9c9c9] to-[#b6b6b6] pl-[5px] text-[10px]">
          {menus.map(([before, key, after]) => (
            <button key={before + key + after}>
              {before}
              <u>{key}</u>
              {after}
            </button>
          ))}
        </nav>
        <Toolbar />
        <div className="flex bg-[linear-gradient(#5c5c5c,#7c7c7c_20px,#646464_21px)] pl-[2px]">
          <FilesPanel />
          <MainPanel />
        </div>
        <BottomPanels />
        <LevelsPanel />
        <StatusBar />
      </div>
    </div>
  );
}
